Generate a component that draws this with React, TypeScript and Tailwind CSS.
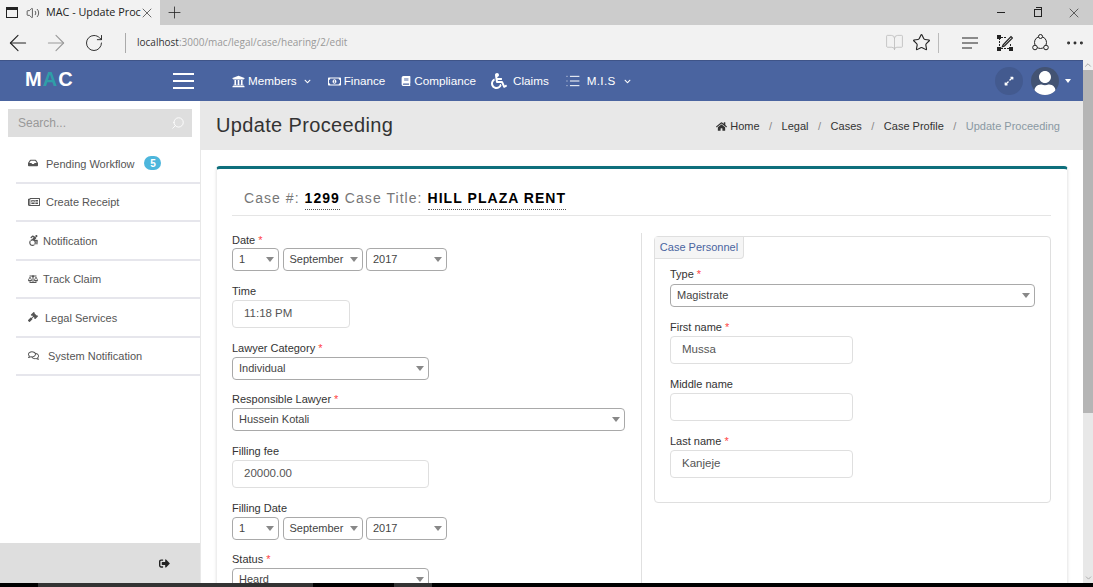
import React from "react";
import { ArrowLeft, ArrowRight, BookOpen, ChevronDown, ChevronUp, List, MoreHorizontal, Plus, RotateCw, Search, Star, Volume2, X } from "lucide-react";
import {
  FaAccessibleIcon,
  FaBalanceScale,
  FaBook,
  FaChevronDown,
  FaExpandAlt,
  FaGavel,
  FaHome,
  FaInbox,
  FaRegComments,
  FaRegMoneyBillAlt,
  FaRegNewspaper,
  FaSignOutAlt,
  FaUniversity,
  FaUser,
  FaWheelchair,
} from "react-icons/fa";

const Select = ({ value, width }: { value: string; width: string }) => (
  <div className={`${width} h-[23px] shrink-0 flex items-center justify-between pl-[6px] pr-[4px] border border-[#a9a9a9] rounded-[4px] bg-white text-[11px] text-[#444]`}>
    <span>{value}</span>
    <span className="w-0 h-0 border-x-[4px] border-x-transparent border-t-[5px] border-t-[#888]" />
  </div>
);

const Input = ({ value, width }: { value?: string; width: string }) => (
  <div className={`${width} h-[28px] flex items-center pl-[11px] border border-[#dfdfdf] rounded-[4px] bg-white text-[11.500px] text-[#555]`}>
    {value}
  </div>
);

const Label = ({ text, required }: { text: string; required?: boolean }) => (
  <div className="h-[15px] leading-[15px] text-[11px] text-[#333] mb-px">
    {text}
    {required && <span className="text-[#f44] ml-[3px]">*</span>}
  </div>
);

const DateRow = () => (
  <div className="flex gap-[3.5px]">
    <Select value="1" width="w-[47px]" />
    <Select value="September" width="w-[80px]" />
    <Select value="2017" width="w-[81px]" />
  </div>
);

const sideItems = [
  { icon: <FaInbox size={10} />, label: "Pending Workflow", gap: "w-[30px]", badge: "5" },
  { icon: <FaRegNewspaper size={12} />, label: "Create Receipt", gap: "w-[30px]" },
  { icon: <FaAccessibleIcon size={11} />, label: "Notification", gap: "w-[27px]" },
  { icon: <FaBalanceScale size={10} />, label: "Track Claim", gap: "w-[27px]" },
  { icon: <FaGavel size={10} />, label: "Legal Services", gap: "w-[29px]" },
  { icon: <FaRegComments size={11} />, label: "System Notification", gap: "w-[32px]" },
];

export default function App() {
  return (
    <div className="w-[1093px] h-[587px] overflow-hidden flex flex-col bg-white font-['Liberation_Sans',Arial,sans-serif]">
      {/* browser tabs */}
      <div className="h-[25px] flex shrink-0 bg-[#cccccc] text-[#222]">
        <div className="w-[160px] bg-[#f2f2f2] flex items-center pl-[6px] font-['Open_Sans',sans-serif] text-[10.800px]">
          <div className="w-[12px] h-[11px] border border-[#222] border-t-[3px]" />
          <Volume2 size={14} strokeWidth={1.2} className="ml-[8px]" />
          <span className="ml-[6px] w-[90px] whitespace-nowrap">MAC - Update Proc</span>
          <X size={16} strokeWidth={1} className="ml-[3px]" />
        </div>
        <Plus size={19} strokeWidth={1} className="ml-[5px] mt-[3px]" />
        <div className="flex-1" />
        <div className="flex items-center pr-[11px]">
          <div className="w-[8px] h-px bg-[#222] mr-[29px]" />
          <div className="relative w-[8px] h-[8px] border border-[#222] mr-[24px]">
            <div className="absolute top-[-3px] left-[1px] w-[6px] h-[2px] border-t border-r border-[#222]" />
          </div>
          <X size={16} strokeWidth={1} />
        </div>
      </div>
      {/* address bar */}
      <div className="h-[35px] shrink-0 flex items-center bg-[#f2f2f2] text-[#222]">
        <ArrowLeft size={26} strokeWidth={1} className="ml-[5px]" />
        <ArrowRight size={26} strokeWidth={1} className="ml-[12px] text-[#999]" />
        <RotateCw size={20} strokeWidth={1.1} className="ml-[15px]" />
        <div className="w-px h-[20px] bg-[#aaa] ml-[21px]" />
        <div className="ml-[11px] font-['Open_Sans',sans-serif] text-[10px] text-[#999] w-[748px]">
          <span className="text-[#333]">localhost</span>:3000/mac/legal/case/hearing/2/edit
        </div>
        <BookOpen size={19} strokeWidth={1} className="text-[#bbb]" />
        <Star size={19} strokeWidth={1.4} className="ml-[8px]" />
        <div className="w-px h-[20px] bg-[#bbb] ml-[7px]" />
        <svg width="17" height="12" viewBox="0 0 17 12" className="ml-[23px]" stroke="#222" fill="none">
          <path d="M0 1h16M0 6h16M0 11h10" />
        </svg>
        <svg width="16" height="16" viewBox="0 0 16 16" className="ml-[18px]" fill="none" stroke="#222">
          <path d="M2.5 3v10M13.5 9v4M4 2.5h6M4 13.5h8" strokeDasharray="2 1" />
          <rect x="0.5" y="0.5" width="3" height="3" fill="#222" />
          <rect x="0.5" y="12.5" width="3" height="3" fill="#222" />
          <rect x="12.5" y="12.5" width="3" height="3" fill="#222" />
          <path d="M6 10l8-8.500 1.500 1.500-8 8-2.200.7z" strokeWidth="1.200" />
        </svg>
        <svg width="17" height="17" viewBox="0 0 17 17" className="ml-[19px]" fill="none" stroke="#222">
          <circle cx="8.500" cy="8.500" r="6" />
          <circle cx="8.500" cy="2.500" r="2" fill="#f2f2f2" />
          <circle cx="3" cy="13.500" r="2.300" fill="#f2f2f2" />
          <circle cx="14" cy="13.500" r="2.300" fill="#f2f2f2" />
        </svg>
        <MoreHorizontal size={22} strokeWidth={1.2} className="ml-[15px]" />
      </div>

      <div className="flex-1 min-h-0 flex">
        <div className="w-[1083px] flex flex-col min-h-0">
          {/* top nav */}
          <div className="h-[41px] shrink-0 flex items-center bg-[#4a64a0] border-t border-[#3f5488] text-white text-[11.700px]">
            <div className="ml-[25px] w-[148px] text-[20px] leading-none font-bold tracking-[1px] mb-[5px]">
              M<span className="text-[#2f9ea8]">A</span>C
            </div>
            <div className="w-[21px] flex flex-col gap-[5px]">
              <div className="h-[2px] bg-white" />
              <div className="h-[2px] bg-white" />
              <div className="h-[2px] bg-white" />
            </div>
            <FaUniversity size={13} className="ml-[38px]" />
            <span className="ml-[3px]">Members</span>
            <FaChevronDown size={7} className="ml-[7px]" />
            <FaRegMoneyBillAlt size={13} className="ml-[17px]" />
            <span className="ml-[3px]">Finance</span>
            <FaBook size={10} className="ml-[16px]" />
            <span className="ml-[3px]">Compliance</span>
            <FaWheelchair size={16} className="ml-[15px]" />
            <span className="ml-[6px]">Claims</span>
            <List size={16} strokeWidth={1.5} className="ml-[16px]" />
            <span className="ml-[6px] tracking-[0.3px]">M.I.S</span>
            <FaChevronDown size={7} className="ml-[8px]" />
            <div className="flex-1" />
            <div className="w-[28px] h-[28px] rounded-full bg-[#435a8f] flex items-center justify-center">
              <FaExpandAlt size={10} />
            </div>
            <div className="w-[28px] h-[28px] rounded-full bg-[#435373] ml-[8px] flex items-end justify-center overflow-hidden">
              <FaUser size={24} />
            </div>
            <span className="w-0 h-0 ml-[6px] mr-[12px] border-x-[3.5px] border-x-transparent border-t-[4px] border-t-white" />
          </div>

          <div className="flex-1 min-h-0 flex">
            {/* sidebar */}
            <div className="w-[201px] shrink-0 flex flex-col border-r border-[#e8e8e8] bg-white">
              <div className="mx-[8px] mt-[8px] h-[28px] bg-[#dedede] flex items-center justify-between pl-[10px] pr-[7px] text-[12px] text-[#999]">
                <span>Search...</span>
                <Search size={14} strokeWidth={1.5} className="text-white -scale-x-100" />
              </div>
              <div className="mt-[8px] flex-1">
                {sideItems.map((item) => (
                  <div key={item.label} className="ml-[16px] h-[38.500px] flex items-center border-b-2 border-[#e6e6ec] text-[11px] text-[#555]">
                    <div className={`${item.gap} pl-[12px] shrink-0`}>{item.icon}</div>
                    <span className="pt-px">{item.label}</span>
                    {item.badge && (
                      <span className="ml-[10px] w-[17px] h-[14px] rounded-full bg-[#4db6dc] text-white font-bold text-[10px] flex items-center justify-center">
                        {item.badge}
                      </span>
                    )}
                  </div>
                ))}
              </div>
              <div className="h-[40px] shrink-0 bg-[#dedede] flex items-center justify-end pr-[30px] text-[#222]">
                <FaSignOutAlt size={11} />
              </div>
            </div>

            <div className="flex-1 min-w-0 flex flex-col overflow-hidden">
              {/* page title */}
              <div className="h-[49px] shrink-0 bg-[#e8e8e8] flex items-center justify-between pl-[15px] pr-[23px]">
                <h1 className="text-[20px] text-[#333] tracking-[0.35px] mb-px">Update Proceeding</h1>
                <div className="flex items-center text-[11px] text-[#333] mt-px">
                  <FaHome size={11} className="mr-[3px]" />
                  <span>Home</span>
                  <span className="mx-[9.5px] text-[#888]">/</span>
                  <span>Legal</span>
                  <span className="mx-[9.5px] text-[#888]">/</span>
                  <span>Cases</span>
                  <span className="mx-[9.5px] text-[#888]">/</span>
                  <span>Case Profile</span>
                  <span className="mx-[9.5px] text-[#888]">/</span>
                  <span className="text-[#8a99a3]">Update Proceeding</span>
                </div>
              </div>

              {/* card */}
              <div className="mt-[16px] ml-[15px] w-[852px] flex-1 pl-[15px] pr-[16px] rounded-t-[4px] border-x border-[#eeeeee] border-t-[3px] border-t-[#0e6f7c] shadow-sm">
                <div className="h-[47px] border-b border-[#e5e5e5] pl-[12px] pt-[18px] text-[14px] leading-[22px] text-[#777] tracking-[1.05px] whitespace-nowrap">
                  Case #: <b className="text-black border-b border-dotted border-[#555] pb-[3px]">1299</b> Case Title:{" "}
                  <b className="text-black border-b border-dotted border-[#555] pb-[3px]">HILL PLAZA RENT</b>
                </div>

                <div className="flex mt-[17px]">
                  <div className="w-[410px] shrink-0 border-r border-[#e0e0e0]">
                    <Label text="Date" required />
                    <div className="-mt-px" />
                    <DateRow />
                    <div className="mt-[13px]" />
                    <Label text="Time" />
                    <Input value="11:18 PM" width="w-[118px]" />
                    <div className="mt-[13px]" />
                    <Label text="Lawyer Category" required />
                    <Select value="Individual" width="w-[197px]" />
                    <div className="mt-[12px]" />
                    <Label text="Responsible Lawyer" required />
                    <Select value="Hussein Kotali" width="w-[393px]" />
                    <div className="mt-[13px]" />
                    <Label text="Filling fee" />
                    <Input value="20000.00" width="w-[197px]" />
                    <div className="mt-[13px]" />
                    <Label text="Filling Date" />
                    <DateRow />
                    <div className="mt-[12px]" />
                    <Label text="Status" required />
                    <div className="mt-px" />
                    <Select value="Heard" width="w-[197px]" />
                  </div>

                  <div className="ml-[12px] mt-[3px] flex-1 min-w-0">
                    <div className="h-[267px] border border-[#dfdfdf] rounded-[4px]">
                      <div className="w-[89px] h-[22px] flex items-center justify-center bg-[#f5f5f5] border-r border-b border-[#dfdfdf] rounded-br-[4px] text-[11px] text-[#4a64a0]">
                        Case Personnel
                      </div>
                      <div className="pl-[15px] pt-[8px]">
                        <Label text="Type" required />
                        <div className="mt-[2px]" />
                        <Select value="Magistrate" width="w-[365px]" />
                        <div className="mt-[13px]" />
                        <Label text="First name" required />
                        <Input value="Mussa" width="w-[183px]" />
                        <div className="mt-[13px]" />
                        <Label text="Middle name" />
                        <Input width="w-[183px]" />
                        <div className="mt-[13px]" />
                        <Label text="Last name" required />
                        <Input value="Kanjeje" width="w-[183px]" />
                      </div>
                    </div>
                  </div>
                </div>
              </div>
            </div>
          </div>
        </div>

        {/* page scrollbar */}
        <div className="w-[10px] shrink-0 bg-[#e8e8e8] flex flex-col items-center text-[#999]">
          <ChevronUp size={9} className="h-[10px] bg-[#f0f0f0] w-full" />
          <div className="h-[343px] w-full bg-[#b5b5b5]" />
          <div className="flex-1" />
          <ChevronDown size={9} className="h-[10px]" />
        </div>
      </div>

      {/* bottom edge */}
      <div className="h-[4px] shrink-0 bg-black flex">
        <div className="ml-[38px] w-[275px] bg-[#333]" />
        <div className="ml-[81px] w-[38px] bg-[#333]" />
      </div>
    </div>
  );
}
